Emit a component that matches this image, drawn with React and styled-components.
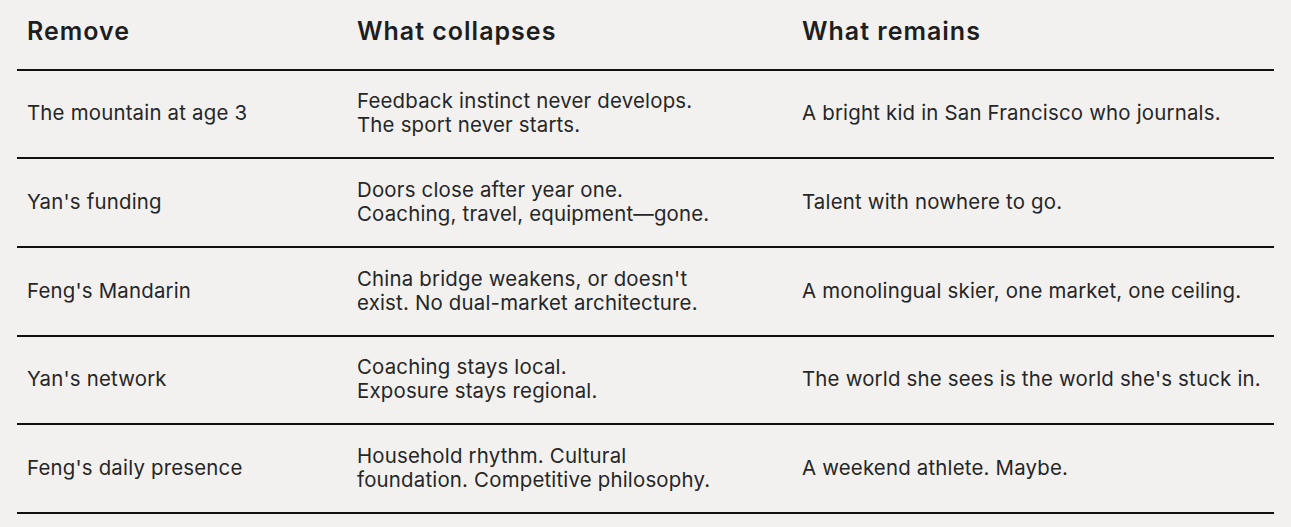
import styled, { createGlobalStyle } from "styled-components";

const rows = [
  ["The mountain at age 3", ["Feedback instinct never develops.", "The sport never starts."], "A bright kid in San Francisco who journals."],
  ["Yan's funding", ["Doors close after year one.", "Coaching, travel, equipment\u2014gone."], "Talent with nowhere to go."],
  ["Feng's Mandarin", ["China bridge weakens, or doesn't", "exist. No dual-market architecture."], "A monolingual skier, one market, one ceiling."],
  ["Yan's network", ["Coaching stays local.", "Exposure stays regional."], "The world she sees is the world she's stuck in."],
  ["Feng's daily presence", ["Household rhythm. Cultural", "foundation. Competitive philosophy."], "A weekend athlete. Maybe."],
];

export default function App() {
  return (
    <>
      <GlobalStyle />
      <Page>
        <Table>
          <HeadRow>
            <HeadCell>Remove</HeadCell>
            <HeadCell>What collapses</HeadCell>
            <HeadCell>What remains</HeadCell>
          </HeadRow>
          {rows.map(([what, collapse, remains]) => (
            <Row key={what}>
              <Cell>{what}</Cell>
              <Cell>
                {collapse.map((l) => (
                  <div key={l}>{l}</div>
                ))}
              </Cell>
              <Cell>{remains}</Cell>
            </Row>
          ))}
        </Table>
      </Page>
    </>
  );
}

const GlobalStyle = createGlobalStyle`
  body {
    margin: 0;
    background: #f2f1ef;
    font-family: Inter, "Noto Sans", sans-serif;
    color: #232323;
  }
`;

const Page = styled.div`
  padding: 0 17px;
  height: 527px;
`;

const Table = styled.div`
  display: flex;
  flex-direction: column;
`;

const cols = `330px 445px 1fr`;

const HeadRow = styled.div`
  display: grid;
  grid-template-columns: ${cols};
  height: 68.5px;
  align-items: center;
  border-bottom: 2px solid #111;
`;

const HeadCell = styled.div`
  padding-left: 10px;
  padding-bottom: 6px;
  font-size: 25px;
  font-weight: 600;
  letter-spacing: 1px;
  color: #1e1e1e;
`;

const Row = styled.div`
  display: grid;
  grid-template-columns: ${cols};
  height: 86.7px;
  align-items: center;
  border-bottom: 2px solid #111;
`;

const Cell = styled.div`
  padding-left: 10px;
  padding-bottom: 1px;
  font-size: 20.4px;
  line-height: 24px;
  letter-spacing: 0.2px;
  color: #262626;
`;
